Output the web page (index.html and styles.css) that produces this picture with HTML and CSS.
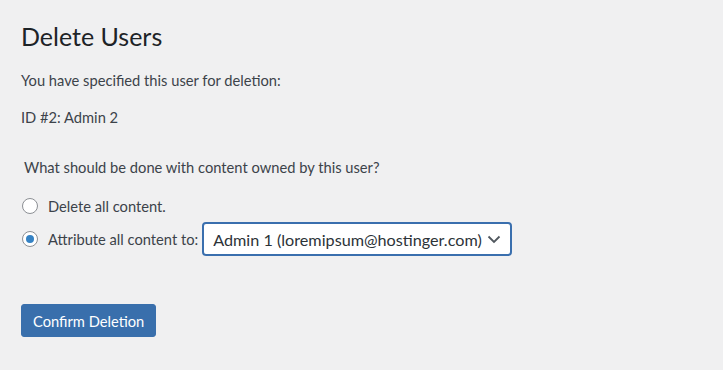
FILE: index.html
```html
<!DOCTYPE html>
<html lang="en">
<head>
  <meta charset="UTF-8">
  <meta name="viewport" content="width=device-width, initial-scale=1.0">
  <title>Delete Users</title>
  <link rel="stylesheet" href="styles.css">
</head>
<body>
  <div class="wrap">
    <h1>Delete Users</h1>
    <p class="intro">You have specified this user for deletion:</p>
    <p class="user-id">ID #2: Admin 2</p>

    <form id="deleteForm">
      <fieldset>
        <p class="legend">What should be done with content owned by this user?</p>
        <div class="option">
          <input type="radio" id="deleteAll" name="delete_option" value="delete">
          <label for="deleteAll">Delete all content.</label>
        </div>
        <div class="option">
          <input type="radio" id="reassign" name="delete_option" value="reassign" checked>
          <label for="reassign">Attribute all content to:</label>
          <div class="select-wrap">
            <select id="reassignUser">
              <option value="1">Admin 1 (loremipsum@hostinger.com)</option>
            </select>
            <svg class="chevron" width="14" height="14" viewBox="0 0 14 14" aria-hidden="true">
              <path d="M1.5 4.5 L7 10 L12.5 4.5" fill="none" stroke="#50575e" stroke-width="1.8"/>
            </svg>
          </div>
        </div>
      </fieldset>

      <button type="submit">Confirm Deletion</button>
    </form>
  </div>
</body>
</html>
```

FILE: styles.css
```css
body {
  font-family: Lato, "Open Sans", sans-serif;
  font-size: 14.7px;
  color: #3c434a;
  background-color: #f0f0f1;
  margin: 0;
  padding: 0;
}

.wrap {
  padding: 20px 21px;
}

h1 {
  font-size: 25px;
  font-weight: 400;
  line-height: 32px;
  color: #1d2327;
  margin: 0;
}

p {
  margin: 0;
  line-height: 20px;
}

.intro {
  margin-top: 18px;
}

.user-id {
  margin-top: 17px;
}

fieldset {
  border: none;
  margin: 30px 0 0;
  padding: 0;
}

.legend {
  padding-left: 3px;
  margin-bottom: 19px;
}

.option {
  display: flex;
  align-items: center;
  min-height: 20px;
}

.option + .option {
  margin-top: 6px;
}

.option input[type="radio"] {
  appearance: none;
  width: 16px;
  height: 16px;
  margin: 0 10px 0 1px;
  border: 1px solid #8c8f94;
  border-radius: 50%;
  background: #fff;
  display: flex;
  align-items: center;
  justify-content: center;
}

.option input[type="radio"]:checked::before {
  content: "";
  width: 8px;
  height: 8px;
  border-radius: 50%;
  background: #3582c4;
}

.option label {
  color: #3c434a;
}

.select-wrap {
  position: relative;
  margin-left: 4px;
}

select {
  appearance: none;
  width: 310px;
  height: 34px;
  padding: 0 24px 0 9px;
  font-family: inherit;
  font-size: 16.2px;
  color: #2c3338;
  background: #fff;
  border: 2px solid #3a6fae;
  border-radius: 4px;
}

.chevron {
  position: absolute;
  right: 11px;
  top: 10px;
  pointer-events: none;
}

button {
  margin-top: 48px;
  height: 33px;
  padding: 0 11px;
  font-family: inherit;
  font-size: 14.7px;
  color: #fff;
  background-color: #396fac;
  border: 1px solid #396fac;
  border-radius: 3px;
  cursor: pointer;
}

button:hover {
  background-color: #2f5f95;
}
```
